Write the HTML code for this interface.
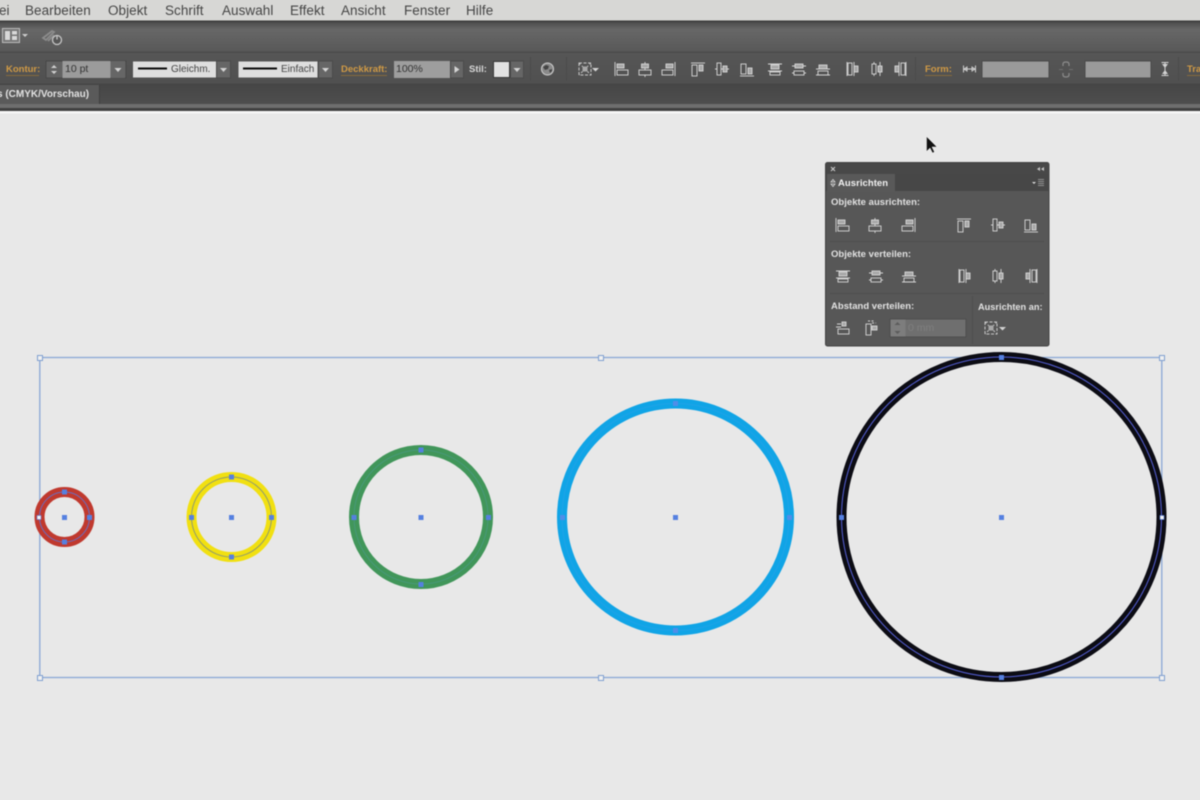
<!DOCTYPE html>
<html lang="de">
<head>
<meta charset="utf-8">
<title>Ausrichten</title>
<style>
html,body{margin:0;padding:0;width:1200px;height:800px;overflow:hidden;background:#e8e8e8}
body{position:relative;font-family:"Liberation Sans",sans-serif}
#w{position:absolute;left:0;top:0;width:1200px;height:800px;filter:blur(.55px)}
svg{position:absolute;left:0;top:0;overflow:visible}
.t{position:absolute;white-space:nowrap;line-height:1}
.m{font-size:13.5px;color:#454545;top:4px;letter-spacing:.05px}
.o{font-size:9.5px;color:#d09a45;font-weight:bold;top:65px}
.l{font-size:9.5px;color:#d8d8d8;font-weight:bold}
.p{font-size:9.5px;color:#e2e2e2;font-weight:bold;letter-spacing:.02px}
</style>
</head>
<body>
<div id="w">
<svg width="1200" height="800" viewBox="0 0 1200 800">
<defs>
<linearGradient id="g1" x1="0" y1="0" x2="0" y2="1"><stop offset="0" stop-color="#4c4c4c"/><stop offset=".25" stop-color="#676767"/><stop offset="1" stop-color="#585858"/></linearGradient>
<linearGradient id="g2" x1="0" y1="0" x2="0" y2="1"><stop offset="0" stop-color="#565656"/><stop offset="1" stop-color="#505050"/></linearGradient>
<linearGradient id="g3" x1="0" y1="0" x2="0" y2="1"><stop offset="0" stop-color="#464646"/><stop offset="1" stop-color="#4e4e4e"/></linearGradient>
<g id="a1" fill="none" stroke="#d8d8d8" stroke-width=".9"><path d="M-6-7V7"/><rect x="-4" y="-5" width="7" height="4" fill="#a8a8a8"/><rect x="-4" y="1" width="11" height="5"/></g>
<g id="a2" fill="none" stroke="#d8d8d8" stroke-width=".9"><path d="M0-7V-5M0-1V1M0 6V8"/><rect x="-3.500" y="-5" width="7" height="4" fill="#a8a8a8"/><rect x="-6" y="1" width="12" height="5"/></g>
<g id="a3" fill="none" stroke="#d8d8d8" stroke-width=".9"><path d="M6-7V7"/><rect x="-3" y="-5" width="7" height="4" fill="#a8a8a8"/><rect x="-7" y="1" width="11" height="5"/></g>
<g id="a4" fill="none" stroke="#d8d8d8" stroke-width=".9"><path d="M-7-6H7"/><rect x="-6" y="-4" width="5" height="11"/><rect x="1" y="-4" width="4" height="6" fill="#a8a8a8"/></g>
<g id="a5" fill="none" stroke="#d8d8d8" stroke-width=".9"><path d="M-7 0H-5M-1 0H1M5 0H7"/><rect x="-5" y="-6" width="4" height="12"/><rect x="1" y="-3" width="4" height="6" fill="#a8a8a8"/></g>
<g id="a6" fill="none" stroke="#d8d8d8" stroke-width=".9"><path d="M-7 7H7"/><rect x="-6" y="-5" width="5" height="10"/><rect x="1" y="-1" width="4" height="6" fill="#a8a8a8"/></g>
<g id="d1" fill="none" stroke="#d8d8d8" stroke-width=".9"><path d="M-7-5H7M-7 2H7"/><rect x="-4" y="-4" width="8" height="4" fill="#a8a8a8"/><rect x="-5" y="3" width="10" height="3"/></g>
<g id="d2" fill="none" stroke="#d8d8d8" stroke-width=".9"><path d="M-7-3H-4M4-3H7M-7 4H-5M5 4H7"/><rect x="-4" y="-5" width="8" height="4" fill="#a8a8a8"/><rect x="-5" y="2" width="10" height="4"/></g>
<g id="d3" fill="none" stroke="#d8d8d8" stroke-width=".9"><path d="M-7 0H7M-7 6H7"/><rect x="-4" y="-4" width="8" height="4" fill="#a8a8a8"/><rect x="-5" y="2" width="10" height="4"/></g>
<g id="d4" fill="none" stroke="#d8d8d8" stroke-width=".9"><path d="M-5-7V7M2-7V7"/><rect x="-4" y="-6" width="4" height="12"/><rect x="2" y="-3" width="4" height="6" fill="#a8a8a8"/></g>
<g id="d5" fill="none" stroke="#d8d8d8" stroke-width=".9"><path d="M-3-7V-5M-3 5V7M3-7V-3M3 3V7"/><rect x="-5" y="-5" width="4" height="10"/><rect x="1" y="-3" width="4" height="6" fill="#a8a8a8"/></g>
<g id="d6" fill="none" stroke="#d8d8d8" stroke-width=".9"><path d="M-1-7V7M6-7V7"/><rect x="1" y="-6" width="4" height="12"/><rect x="-5" y="-3" width="4" height="6" fill="#a8a8a8"/></g>
<g id="s1" fill="none" stroke="#d8d8d8" stroke-width=".9"><rect x="-1" y="-6" width="4" height="4" fill="#a8a8a8"/><path d="M-7 -1H-2M-6-4H-2"/><rect x="-5" y="1" width="11" height="5"/></g>
<g id="s2" fill="none" stroke="#d8d8d8" stroke-width=".9"><rect x="-5" y="-4" width="5" height="11"/><rect x="1" y="-2" width="5" height="4" fill="#a8a8a8"/><path d="M-3-7H3M1-5H5" stroke-dasharray="2 1.500"/></g>
<g id="ref" fill="none" stroke="#c8c8c8" stroke-width="1"><rect x="-6" y="-6" width="12" height="12" stroke-dasharray="3 1.500"/><path d="M-6-6L6 6M6-6L-6 6" stroke-dasharray="2 2"/><rect x="-2.500" y="-2.500" width="5" height="5" fill="#a8a8a8" stroke="none"/></g>
</defs>

<!-- canvas base -->
<rect x="-5" y="112" width="1210" height="695" fill="#e8e8e8"/>
<!-- menu -->
<rect x="-5" y="-5" width="1210" height="25.500" fill="#d7d7d5"/>
<rect x="-5" y="20.500" width="1210" height="1.500" fill="#3c3c3c"/>
<!-- toolbar -->
<rect x="-5" y="22" width="1210" height="30" fill="url(#g1)"/>
<rect x="-5" y="51.500" width="1210" height="1.500" fill="#4c4c4c"/>
<rect x="-5" y="53" width="1210" height="31" fill="url(#g2)"/>
<rect x="-5" y="84" width="1210" height="20" fill="url(#g3)"/>
<rect x="-5" y="83.500" width="1210" height="1" fill="#464646"/>
<rect x="-5" y="104" width="1210" height="4" fill="#6e6e6e"/>
<rect x="-5" y="108" width="1210" height="3" fill="#404040"/>
<rect x="-5" y="111" width="1210" height="2.500" fill="#f6f6f6"/>
<!-- tab -->
<rect x="-5" y="85" width="104" height="19" fill="#5a5a5a"/>
<path d="M99.500 85V104" stroke="#404040"/>

<!-- workspace icon -->
<rect x="2.500" y="28.500" width="17" height="14" fill="#777" stroke="#bbb"/>
<path d="M5 31h5v9H5zM12 31h5v3.500h-5zM12 36h5v4h-5z" fill="#d8d8d8"/>
<path d="M22 34h6l-3 3z" fill="#ccc"/>
<path d="M43 38l9-7 2 1-8 8zM48 41l6-6" stroke="#8c8c8c" stroke-width="1.800" fill="none"/>
<circle cx="57" cy="40" r="4.500" fill="#565656" stroke="#c6c6c6" stroke-width="1.300"/>
<path d="M57 35.500v4" stroke="#c6c6c6" stroke-width="1.300"/>

<!-- Kontur -->
<path d="M6 75.500H39" stroke="#9a7436" stroke-width=".8"/>
<rect x="46" y="61" width="80" height="17" fill="#636363" stroke="#474747"/>
<path d="M54 65l-3 3h6zM54 74l-3-3h6z" fill="#d0d0d0"/>
<rect x="62.500" y="61" width="48" height="17" fill="#9b9b9b"/>
<rect x="111" y="61" width="14" height="17" fill="#666"/>
<path d="M114.500 68h7l-3.500 4z" fill="#d4d4d4"/>
<!-- Gleichm -->
<rect x="133" y="61.500" width="83" height="16" fill="#dedede"/>
<path d="M138 68.500H167" stroke="#0b0b0b" stroke-width="2"/>
<rect x="216.500" y="61" width="14" height="17" fill="#666" stroke="#4a4a4a"/>
<path d="M220 68h7l-3.500 4z" fill="#d4d4d4"/>
<!-- Einfach -->
<rect x="238.500" y="61.500" width="79" height="16" fill="#dedede"/>
<path d="M243 68.500H277" stroke="#0b0b0b" stroke-width="2"/>
<rect x="318.500" y="61" width="14" height="17" fill="#666" stroke="#4a4a4a"/>
<path d="M322 68h7l-3.500 4z" fill="#d4d4d4"/>
<path d="M341 75.500H387" stroke="#9a7436" stroke-width=".8"/>
<!-- Deckkraft -->
<rect x="394" y="61" width="56" height="17" fill="#9e9e9e"/>
<rect x="450.500" y="61" width="13" height="17" fill="#666" stroke="#4a4a4a"/>
<path d="M454.500 66l5 3.500-5 3.500z" fill="#d4d4d4"/>
<!-- Stil -->
<rect x="493.500" y="61.500" width="16" height="16" fill="#e2e2e2" stroke="#3a3a3a"/>
<rect x="510.500" y="61" width="13" height="17" fill="#666" stroke="#4a4a4a"/>
<path d="M513.500 68h7l-3.500 4z" fill="#d4d4d4"/>
<path d="M530.500 57V81M566.500 57V81M915.500 57V81M1178.500 57V81" stroke="#4b4b4b"/>
<!-- globe -->
<circle cx="547.500" cy="69" r="6" fill="#8a8a8a" stroke="#d0d0d0"/>
<path d="M543 67l3-2 3 1-1 3-3 1zM549 70l3-1v2l-2 2z" fill="#444"/>
<use href="#ref" x="585" y="69"/>
<path d="M592 68h7l-3.500 3.500z" fill="#d4d4d4"/>
<use href="#a1" x="621" y="69"/><use href="#a2" x="645" y="69"/><use href="#a3" x="669" y="69"/>
<use href="#a4" x="698" y="69"/><use href="#a5" x="722" y="69"/><use href="#a6" x="747" y="69"/>
<use href="#d1" x="775" y="69"/><use href="#d2" x="799" y="69"/><use href="#d3" x="823" y="69"/>
<use href="#d4" x="852" y="69"/><use href="#d5" x="877" y="69"/><use href="#d6" x="900" y="69"/>
<!-- Form -->
<path d="M925 75.500H952" stroke="#9a7436" stroke-width=".8"/>
<path d="M963.500 65.500v7M975.500 65.500v7M964 69h11M964 69l3-2v4zM975 69l-3-2v4z" stroke="#cfcfcf" stroke-width="1" fill="none"/>
<rect x="982" y="61" width="67" height="17" fill="#9a9a9a" stroke="#4a4a4a"/>
<path d="M1063 66v-2q0-2 3-2t3 2v2M1063 73v2q0 2 3 2t3-2v-2" stroke="#8c8c8c" stroke-width="1.200" fill="none"/>
<path d="M1059 69.500h4M1069 69.500h4" stroke="#6e6e6e"/>
<rect x="1085" y="61" width="66" height="17" fill="#9a9a9a" stroke="#4a4a4a"/>
<path d="M1161.500 62.500h7M1161.500 75.500h7M1165 63v12" stroke="#d4d4d4" fill="none"/>
<path d="M1162 64h6l-3 4zM1162 74h6l-3-4z" fill="#d4d4d4"/>
<path d="M1187 75.500H1205" stroke="#9a7436" stroke-width=".8"/>

<!-- panel -->
<rect x="825.500" y="162.500" width="223.500" height="183.500" rx="2" fill="#575757" stroke="#424242"/>
<rect x="826" y="163" width="223" height="11" fill="#484848"/>
<rect x="826" y="174" width="223" height="17" fill="#474747"/>
<rect x="827" y="174" width="68" height="17" fill="#595959"/>
<path d="M831 167l4 4M835 167l-4 4" stroke="#d0d0d0" stroke-width="1"/>
<path d="M1040 167l-3 2 3 2zM1044 167l-3 2 3 2z" fill="#c8c8c8"/>
<path d="M833 179.500l-2 2.500h4zM833 186.500l-2-2.500h4z" fill="none" stroke="#ddd" stroke-width=".8"/>
<path d="M1032 182h4l-2 2z" fill="#ddd"/>
<path d="M1038 179.500h6M1038 181.500h6M1038 183.500h6M1038 185.500h6" stroke="#8f8f8f"/>
<path d="M830 241.500H1044M830 293.500H1044" stroke="#4e4e4e"/>
<path d="M972.500 296V344" stroke="#4e4e4e"/>
<use href="#a1" x="842" y="225"/><use href="#a2" x="875" y="225"/><use href="#a3" x="909" y="225"/>
<use href="#a4" x="964" y="225"/><use href="#a5" x="998" y="225"/><use href="#a6" x="1031" y="225"/>
<use href="#d1" x="843" y="276"/><use href="#d2" x="876" y="276"/><use href="#d3" x="909" y="276"/>
<use href="#d4" x="964" y="276"/><use href="#d5" x="998" y="276"/><use href="#d6" x="1031" y="276"/>
<use href="#s1" x="843" y="328"/>
<use href="#s2" x="871" y="328"/>
<rect x="890" y="319" width="76" height="18" fill="#6f6f6f" stroke="#4d4d4d"/>
<rect x="890.500" y="319.500" width="15" height="17" fill="#7d7d7d"/>
<path d="M897.500 322l-3 3h6zM897.500 334l-3-3h6z" fill="#5c5c5c"/>
<use href="#ref" x="991" y="328"/>
<path d="M999 327h7l-3.500 3.500z" fill="#d4d4d4"/>

<!-- bbox -->
<rect x="39.800" y="357.500" width="1122" height="320" fill="none" stroke="#8aa8d6" stroke-width="1.300"/>
<g fill="#f0f0f0" stroke="#7f9fd0" stroke-width="1">
<rect x="37.500" y="355.500" width="5" height="5"/><rect x="598.500" y="355.500" width="5" height="5"/><rect x="1159.500" y="355.500" width="5" height="5"/>
<rect x="37.500" y="675.500" width="5" height="5"/><rect x="598.500" y="675.500" width="5" height="5"/><rect x="1159.500" y="675.500" width="5" height="5"/>
</g>

<!-- circles -->
<g fill="none" stroke-width="10">
<circle cx="64.500" cy="517" r="25" stroke="#c0392e"/>
<circle cx="231.500" cy="517" r="40" stroke="#f1e011"/>
<circle cx="421" cy="517" r="67" stroke="#41965a"/>
<circle cx="675.500" cy="517" r="113.500" stroke="#10a4e6"/>
<circle cx="1001.500" cy="517" r="160" stroke="#0c0c14"/>
</g>
<g fill="none" stroke-width="1">
<circle cx="64.500" cy="517" r="25" stroke="#6a6ec0"/>
<circle cx="231.500" cy="517" r="40" stroke="#8f9a70"/>
<circle cx="421" cy="517" r="67" stroke="#48987a"/>
<circle cx="675.500" cy="517" r="113.500" stroke="#20a2e8"/>
<circle cx="1001.500" cy="517" r="160" stroke="#5560d8"/>
</g>
<g fill="#5580e0">
<rect x="62" y="515" width="5" height="5"/><rect x="62" y="489.500" width="5" height="5"/><rect x="62" y="539.500" width="5" height="5"/><rect x="87" y="515" width="5" height="5"/>
<rect x="229" y="515" width="5" height="5"/><rect x="229" y="474.500" width="5" height="5"/><rect x="229" y="554.500" width="5" height="5"/><rect x="189" y="515" width="5" height="5"/><rect x="269" y="515" width="5" height="5"/>
<rect x="418.500" y="515" width="5" height="5"/><rect x="418.500" y="447.500" width="5" height="5"/><rect x="418.500" y="582" width="5" height="5"/><rect x="351.500" y="515" width="5" height="5"/><rect x="486" y="515" width="5" height="5"/>
<rect x="673" y="515" width="5" height="5"/>
<rect x="999" y="515" width="5" height="5"/><rect x="999" y="355" width="5" height="5"/><rect x="999" y="675" width="5" height="5"/><rect x="839" y="515" width="5" height="5"/>
</g>
<g fill="#4f8ee8"><rect x="673" y="401" width="5" height="5"/><rect x="673" y="628" width="5" height="5"/><rect x="560" y="515" width="5" height="5"/><rect x="787" y="515" width="5" height="5"/></g>
<rect x="37" y="515.500" width="4" height="4" fill="#f4f4f4" stroke="#5580e0" stroke-width=".6"/>
<rect x="1160" y="515.500" width="4" height="4" fill="#f4f4f4" stroke="#5580e0" stroke-width=".6"/>

<!-- cursor -->
<path d="M926.500 136.500v15l3.500-3.500 2.500 5 2-1-2.500-5h5z" fill="#111" stroke="#eee" stroke-width=".5"/>
</svg>

<div class="t m" style="left:-1px">ei</div>
<div class="t m" style="left:25px">Bearbeiten</div>
<div class="t m" style="left:108px">Objekt</div>
<div class="t m" style="left:165px">Schrift</div>
<div class="t m" style="left:222px">Auswahl</div>
<div class="t m" style="left:290px">Effekt</div>
<div class="t m" style="left:341px">Ansicht</div>
<div class="t m" style="left:404px">Fenster</div>
<div class="t m" style="left:466px">Hilfe</div>

<div class="t o" style="left:6px">Kontur:</div>
<div class="t" style="left:65px;top:64px;font-size:10.500px;color:#333">10 pt</div>
<div class="t" style="left:171px;top:65px;font-size:10px;color:#444">Gleichm.</div>
<div class="t" style="left:281px;top:65px;font-size:10px;color:#444">Einfach</div>
<div class="t o" style="left:341px">Deckkraft:</div>
<div class="t" style="left:396px;top:64px;font-size:10.500px;color:#333">100%</div>
<div class="t l" style="left:469px;top:65px">Stil:</div>
<div class="t o" style="left:925px">Form:</div>
<div class="t o" style="left:1187px">Transformieren</div>
<div class="t l" style="left:-3px;top:90px;font-size:10px;color:#e2e2e2">s (CMYK/Vorschau)</div>

<div class="t" style="left:838px;top:178.500px;font-size:9.500px;font-weight:bold;color:#f2f2f2;letter-spacing:.05px">Ausrichten</div>
<div class="t p" style="left:831px;top:198px">Objekte ausrichten:</div>
<div class="t p" style="left:831px;top:250px">Objekte verteilen:</div>
<div class="t p" style="left:831px;top:302px">Abstand verteilen:</div>
<div class="t p" style="left:978px;top:303px;font-size:9.200px">Ausrichten an:</div>
<div class="t" style="left:908px;top:323px;font-size:10.500px;color:#7f7f7f">0 mm</div>
</div>
</body>
</html>
